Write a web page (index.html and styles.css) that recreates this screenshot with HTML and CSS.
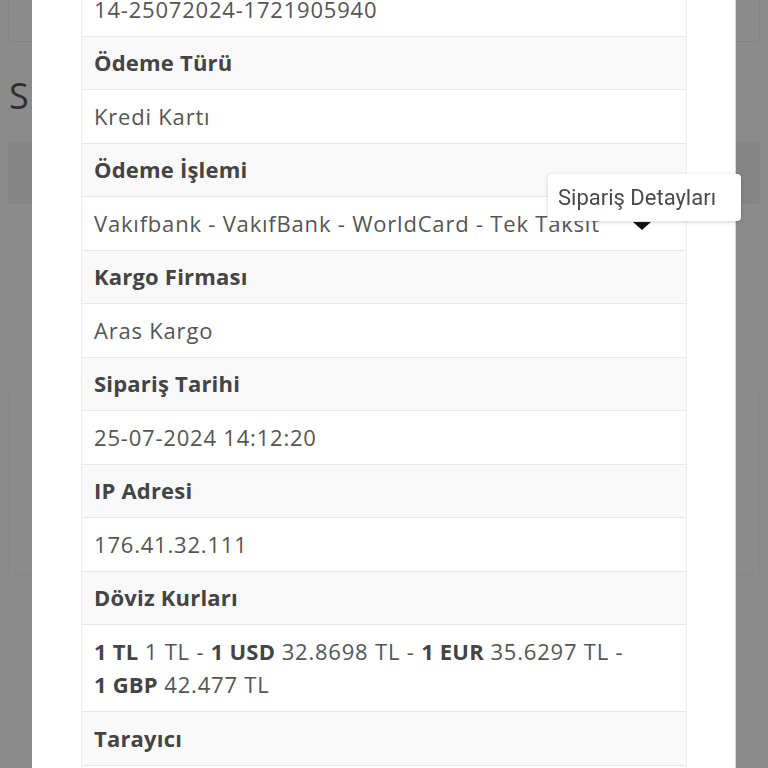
FILE: index.html
```html
<!DOCTYPE html>
<html lang="tr">
<head>
  <meta charset="UTF-8">
  <meta name="viewport" content="width=device-width, initial-scale=1.0">
  <title>Sipariş Detayları</title>
  <link rel="stylesheet" href="styles.css">
</head>
<body>
  <div class="page">
    <div class="page-top"><span class="page-top-text">T</span></div>
    <h2 class="page-title">S</h2>
    <div class="page-bar"></div>
    <div class="page-card"></div>
  </div>

  <div class="modal">
    <div class="modal-body">
      <table class="details">
        <tr><td>14-25072024-1721905940</td></tr>
        <tr class="head"><th>Ödeme Türü</th></tr>
        <tr><td>Kredi Kartı</td></tr>
        <tr class="head"><th>Ödeme İşlemi</th></tr>
        <tr><td>Vakıfbank - VakıfBank - WorldCard - Tek Taksit</td></tr>
        <tr class="head"><th>Kargo Firması</th></tr>
        <tr><td>Aras Kargo</td></tr>
        <tr class="head"><th>Sipariş Tarihi</th></tr>
        <tr><td>25-07-2024 14:12:20</td></tr>
        <tr class="head"><th>IP Adresi</th></tr>
        <tr><td>176.41.32.111</td></tr>
        <tr class="head"><th>Döviz Kurları</th></tr>
        <tr><td><b>1 TL</b> 1 TL - <b>1 USD</b> 32.8698 TL - <b>1 EUR</b> 35.6297 TL - <b>1 GBP</b> 42.477 TL</td></tr>
        <tr class="head"><th>Tarayıcı</th></tr>
        <tr><td>Mozilla/5.0</td></tr>
      </table>
    </div>
  </div>

  <div class="tooltip">Sipariş Detayları<span class="tooltip-caret"></span></div>
</body>
</html>
```

FILE: styles.css
```css
body {
  margin: 0;
  background-color: #8b8b8b;
  font-family: 'Open Sans', 'Lato', sans-serif;
  height: 768px;
  overflow: hidden;
}

/* sayfa (arka plan, karartılmış) */
.page {
  padding: 0 8px;
}

.page-top {
  height: 62px;
  margin-top: -20px;
  border: 1px solid #838383;
  border-radius: 3px;
  box-sizing: border-box;
  position: relative;
}

.page-top-text {
  position: absolute;
  left: 18px;
  top: 6px;
  font-size: 30px;
  line-height: 30px;
  color: #222;
}

.page-title {
  margin: 34px 0 0 1px;
  font-size: 36px;
  font-weight: normal;
  line-height: 40px;
  color: #2e2e2e;
}

.page-bar {
  height: 62px;
  margin-top: 26px;
  background-color: #858585;
}

.page-card {
  height: 188px;
  margin-top: 184px;
  border: 1px solid #878787;
  box-sizing: border-box;
}

/* modal */
.modal {
  position: fixed;
  top: 0;
  left: 32px;
  width: 704px;
  height: 768px;
  background-color: #ffffff;
  border-right: 1px solid #d8d8d8;
  box-sizing: border-box;
  overflow: hidden;
}

.modal-body {
  padding: 0 48px 0 49px;
  margin-top: -18px;
}

.details {
  width: 100%;
  border-collapse: collapse;
  border-left: 1px solid #eeeeee;
  border-right: 1px solid #eeeeee;
  font-size: 22px;
  letter-spacing: 0.8px;
  color: #555555;
}

.details th,
.details td {
  text-align: left;
  padding: 9.5px 13px 9.5px 12px;
  line-height: 33.5px;
  border-top: 1px solid #e8e8e8;
}

.details th {
  font-weight: 700;
  letter-spacing: 0.2px;
  color: #444444;
}

.details b {
  font-weight: 700;
  letter-spacing: 0.2px;
  white-space: nowrap;
  color: #444444;
}

.details .head {
  background-color: #f9f9f9;
}

/* tooltip */
.tooltip {
  position: fixed;
  left: 548px;
  top: 174px;
  width: 193px;
  height: 47px;
  box-sizing: border-box;
  padding-left: 10px;
  background-color: #ffffff;
  border-radius: 4px;
  box-shadow: 0 1px 4px rgba(0, 0, 0, 0.18);
  font-family: 'Roboto', sans-serif;
  font-size: 22px;
  line-height: 47px;
  color: #4a4a4a;
}

.tooltip-caret {
  position: absolute;
  left: 85px;
  top: 48px;
  width: 0;
  height: 0;
  border-left: 9px solid transparent;
  border-right: 9px solid transparent;
  border-top: 8px solid #111111;
}
```
